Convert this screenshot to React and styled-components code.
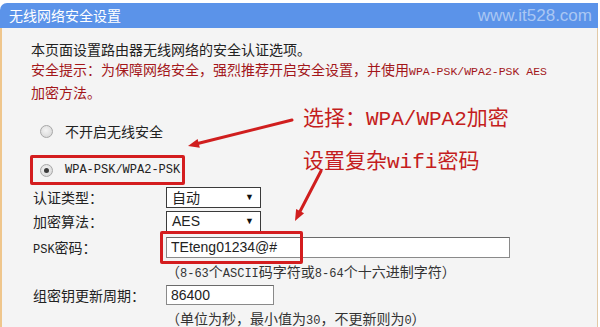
import React from 'react';
import styled, { createGlobalStyle } from 'styled-components';

const CJK = `"Noto Sans CJK SC", "Liberation Sans", sans-serif`;
const MONO = `"Liberation Mono", "Noto Sans CJK SC", monospace`;

const GlobalStyle = createGlobalStyle`
  html, body { margin: 0; padding: 0; background: #fff; }
  body { font-family: ${CJK}; }
`;

const Page = styled.div`
  position: relative;
  width: 600px;
  height: 327px;
  overflow: hidden;
  padding-top: 3px;
  box-sizing: border-box;
  display: flex;
`;

const Panel = styled.div`
  width: 598px;
  display: flex;
  flex-direction: column;
`;

const Header = styled.div`
  height: 25px;
  flex: none;
  background: #5b93e9;
  border-top-left-radius: 7px;
  display: flex;
  align-items: center;
  justify-content: space-between;
  padding: 0 6px 0 9px;
  .title {
    color: #fff;
    font-size: 14px;
    line-height: 25px;
  }
  .mark {
    font-family: "Liberation Sans", Arial, sans-serif;
    font-size: 17px;
    color: #aac7f3;
  }
`;

const Body = styled.div`
  flex: 1;
  background: #f4f4f4;
  border-left: 2px solid #efc68c;
  border-right: 1px solid #e2c9a6;
  padding: 11px 0 0 29px;
  color: #222;
  font-size: 14px;
`;

const Intro = styled.p`
  margin: 0;
  line-height: 20px;
  white-space: nowrap;
  color: ${p => (p.$warn ? '#a3161a' : '#222')};
`;

const Mono = styled.span`
  font-family: ${MONO};
  font-size: ${p => p.$size || 12}px;
`;

const RadioRow = styled.div`
  display: flex;
  align-items: center;
  gap: 12px;
  height: 20px;
  margin-top: 19px;
  padding-left: 9px;
  font-size: 14px;
`;

const Highlight = styled.div`
  display: flex;
  align-items: center;
  gap: 12px;
  width: 155px;
  height: 30px;
  box-sizing: border-box;
  border: 3px solid #d41d1f;
  border-radius: 2px;
  margin: 14px 0 0 -1px;
  padding-left: 7px;
`;

const Radio = styled.span`
  width: 13px;
  height: 13px;
  box-sizing: border-box;
  border-radius: 50%;
  border: 1px solid #a7a7a7;
  background: radial-gradient(circle at 45% 40%, #f4f4f4 0%, #dcdcdc 70%, #c9c9c9 100%);
  display: flex;
  align-items: center;
  justify-content: center;
  &::after {
    content: '';
    width: 5px;
    height: 5px;
    border-radius: 50%;
    background: ${p => (p.$checked ? '#3a3a3a' : 'transparent')};
  }
`;

const FormRow = styled.div`
  display: flex;
  align-items: center;
  height: ${p => p.$h}px;
`;

const Label = styled.span`
  width: 135px;
  padding-left: 2px;
  box-sizing: border-box;
  font-size: 14px;
`;

const Select = styled.div`
  width: 95px;
  height: 21px;
  box-sizing: border-box;
  border: 1px solid #3a3a3a;
  background: #fff;
  display: flex;
  align-items: center;
  justify-content: space-between;
  padding: 0 6px 0 5px;
  font-size: 14px;
  font-family: "Liberation Sans", "Noto Sans CJK SC", sans-serif;
  .arrow {
    font-size: 9px;
    color: #111;
  }
`;

const Field = styled.span`
  position: relative;
  display: inline-flex;
  ${p => p.$marked && `
    &::after {
      content: '';
      position: absolute;
      left: -6px;
      top: -6px;
      width: 143px;
      height: 33px;
      box-sizing: border-box;
      border: 3px solid #d41d1f;
      border-radius: 2px;
    }
  `}
`;

const Input = styled.input`
  width: ${p => p.$w}px;
  height: ${p => p.$h || 21}px;
  box-sizing: border-box;
  border: 1px solid #8a8a8a;
  border-top-color: #6a6a6a;
  background: #fff;
  padding: 0 4px;
  margin: 0;
  font-family: "Liberation Sans", Arial, sans-serif;
  font-size: 14px;
  color: #222;
  outline: none;
`;

const Hint = styled.div`
  height: ${p => p.$h}px;
  line-height: ${p => p.$h}px;
  padding-left: 135px;
  font-size: 14px;
  color: #333;
  white-space: nowrap;
`;

const Note = styled.div`
  position: absolute;
  left: 303px;
  top: ${p => p.$top}px;
  font-size: 21px;
  line-height: 24px;
  color: #c41d20;
  white-space: nowrap;
`;

const Arrows = styled.svg`
  position: absolute;
  left: 0;
  top: 0;
  pointer-events: none;
`;

export default function App() {
  return (
    <>
      <GlobalStyle />
      <Page>
        <Panel>
          <Header>
            <span className="title">无线网络安全设置</span>
            <span className="mark">www.it528.com</span>
          </Header>
          <Body>
            <Intro>本页面设置路由器无线网络的安全认证选项。</Intro>
            <Intro $warn>
              安全提示：为保障网络安全，强烈推荐开启安全设置，并使用<Mono $size={11.5}>WPA-PSK/WPA2-PSK AES</Mono>
            </Intro>
            <Intro $warn>加密方法。</Intro>

            <RadioRow>
              <Radio />
              <span>不开启无线安全</span>
            </RadioRow>
            <Highlight>
              <Radio $checked />
              <Mono>WPA-PSK/WPA2-PSK</Mono>
            </Highlight>

            <FormRow $h={24}>
              <Label>认证类型：</Label>
              <Select>
                <span>自动</span>
                <span className="arrow">▼</span>
              </Select>
            </FormRow>
            <FormRow $h={24}>
              <Label>加密算法：</Label>
              <Select>
                <span>AES</span>
                <span className="arrow">▼</span>
              </Select>
            </FormRow>
            <FormRow $h={28}>
              <Label><Mono>PSK</Mono>密码：</Label>
              <Field $marked>
                <Input $w={344} readOnly value="TEteng01234@#" />
              </Field>
            </FormRow>
            <Hint $h={20}>
              （<Mono>8-63</Mono>个<Mono>ASCII</Mono>码字符或<Mono>8-64</Mono>个十六进制字符）
            </Hint>
            <FormRow $h={28}>
              <Label>组密钥更新周期：</Label>
              <Field>
                <Input $w={108} $h={20} readOnly value="86400" />
              </Field>
            </FormRow>
            <Hint $h={18}>
              （单位为秒，最小值为<Mono>30</Mono>，不更新则为<Mono>0</Mono>）
            </Hint>
          </Body>
        </Panel>

        <Note $top={104}>选择：<Mono $size={21}>WPA/WPA2</Mono>加密</Note>
        <Note $top={147}>设置复杂<Mono $size={21}>wifi</Mono>密码</Note>

        <Arrows width="600" height="327" viewBox="0 0 600 327">
          <line x1="292" y1="120" x2="198.7" y2="143.3" stroke="#d01e1e" strokeWidth="3" strokeLinecap="round" />
          <polygon points="188,146 199.8,147.7 197.6,138.9" fill="#d01e1e" />
          <line x1="321" y1="171" x2="300.1" y2="211.2" stroke="#d01e1e" strokeWidth="3" strokeLinecap="round" />
          <polygon points="295,221 304.1,213.3 296.1,209.1" fill="#d01e1e" />
        </Arrows>
      </Page>
    </>
  );
}
